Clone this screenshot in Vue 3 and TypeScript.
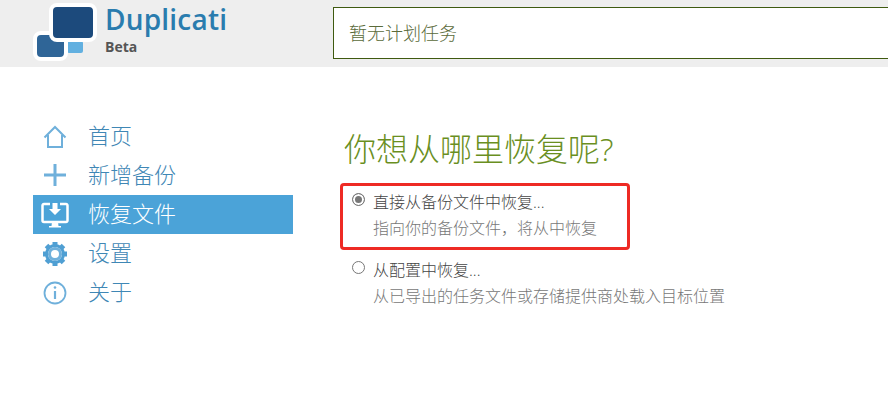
<script setup lang="ts">
const menu = [
  { label: '首页', icon: 'home' },
  { label: '新增备份', icon: 'add' },
  { label: '恢复文件', icon: 'restore', active: true },
  { label: '设置', icon: 'gear' },
  { label: '关于', icon: 'info' },
];
</script>

<template>
  <div class="page">
    <header class="top">
      <div class="logo">
        <svg class="mark" width="64" height="62" viewBox="0 0 64 62">
          <rect x="34" y="39" width="16" height="12" rx="2" fill="#62b0e0" />
          <rect x="2" y="31" width="31" height="26" rx="6" fill="#2f6597" stroke="#fff" stroke-width="4" />
          <rect x="18" y="3" width="44" height="35" rx="6" fill="#1c4a7c" stroke="#fff" stroke-width="4" />
        </svg>
        <div class="brand">
          <div class="name">Duplicati</div>
          <div class="beta">Beta</div>
        </div>
      </div>
      <div class="status">暂无计划任务</div>
    </header>

    <div class="body">
      <nav class="side">
        <a v-for="m in menu" :key="m.label" :class="['item', { active: m.active }]">
          <span class="icon">
            <svg v-if="m.icon === 'home'" width="24" height="24" viewBox="0 0 24 24" fill="none" stroke="#6fb0db" stroke-width="2">
              <path d="M1.5 12.5 12 2l10.5 10.500M5 10v12h14V10" />
            </svg>
            <svg v-else-if="m.icon === 'add'" class="plus" width="22" height="22" viewBox="0 0 22 22" fill="none" stroke="#6fb0db" stroke-width="3">
              <path d="M11 0v22M0 11h22" />
            </svg>
            <svg v-else-if="m.icon === 'restore'" width="28" height="28" viewBox="0 0 28 28">
              <path d="M9 3H3a1.500 1.500 0 0 0-1.500 1.500v15A1.500 1.500 0 0 0 3 21h22a1.500 1.500 0 0 0 1.500-1.500v-15A1.500 1.500 0 0 0 25 3h-6" fill="none" stroke="#fff" stroke-width="2.500" />
              <path d="M11.500 2h5v6h3.500L14 14 8 8h3.500zM11 21h6l.5 4h2.500v1.500H8V25h2.500z" fill="#fff" />
            </svg>
            <svg v-else-if="m.icon === 'gear'" width="26" height="26" viewBox="0 0 26 26">
              <circle cx="13" cy="13" r="7.500" fill="none" stroke="#4f9fd3" stroke-width="5" />
              <path d="M13 1v24M1 13h24M4.500 4.500l17 17M21.500 4.500l-17 17" stroke="#4f9fd3" stroke-width="5" />
              <circle cx="13" cy="13" r="7" fill="#fff" />
              <circle cx="13" cy="13" r="5.500" fill="none" stroke="#6fb0db" stroke-width="3" />
            </svg>
            <svg v-else width="24" height="24" viewBox="0 0 24 24" fill="none" stroke="#6fb0db" stroke-width="1.800">
              <circle cx="12" cy="12" r="10.500" />
              <path d="M12 10v8" stroke-width="2.200" />
              <circle cx="12" cy="6.500" r="1.300" fill="#6fb0db" stroke="none" />
            </svg>
          </span>
          <span class="label">{{ m.label }}</span>
        </a>
      </nav>

      <main class="content">
        <h1>你想从哪里恢复呢?</h1>
        <div class="option first">
          <span class="radio checked"></span>
          <div>
            <div class="opt-title">直接从备份文件中恢复...</div>
            <div class="opt-desc">指向你的备份文件，将从中恢复</div>
          </div>
          <div class="mark-box"></div>
        </div>
        <div class="option">
          <span class="radio"></span>
          <div>
            <div class="opt-title">从配置中恢复...</div>
            <div class="opt-desc">从已导出的任务文件或存储提供商处载入目标位置</div>
          </div>
        </div>
      </main>
    </div>
  </div>
</template>

<style>
html, body {
  margin: 0;
  background: #fff;
  overflow: hidden;
}
</style>

<style scoped>
.page {
  width: 888px;
  height: 412px;
  overflow: hidden;
  font-family: "Open Sans", "Noto Sans CJK SC", sans-serif;
}

.top {
  display: flex;
  height: 67px;
  background: #eeeeee;
}

.logo {
  display: flex;
  width: 333px;
  flex-shrink: 0;
  padding-left: 33px;
  box-sizing: border-box;
}

.mark {
  margin-top: 2px;
}

.brand {
  margin-left: 8px;
}

.name {
  font-size: 28px;
  font-weight: 600;
  line-height: 38px;
  letter-spacing: 0.2px;
  color: #2a7cae;
}

.beta {
  font-size: 14px;
  font-weight: 700;
  line-height: 18px;
  color: #555;
}

.status {
  flex: 1;
  height: 52px;
  margin-top: 7px;
  padding-left: 15px;
  box-sizing: border-box;
  border: 1px solid #3f5a10;
  border-right: 0;
  background: #fff;
  font-size: 18px;
  font-weight: 300;
  line-height: 50px;
  color: #5a6b3a;
}

.body {
  display: flex;
}

.side {
  width: 260px;
  margin: 50px 0 0 33px;
  flex-shrink: 0;
}

.item {
  display: flex;
  align-items: center;
  height: 39px;
  color: #3f87b5;
}

.item.active {
  background: #4ba3d8;
  color: #fff;
}

.icon {
  display: flex;
  justify-content: center;
  width: 44px;
}

.plus {
  margin-top: -2px;
}

.label {
  margin-left: 11px;
  margin-top: -4px;
  font-size: 22px;
  font-weight: 300;
  line-height: 30px;
}

.content {
  margin-left: 51px;
}

h1 {
  margin: 58px 0 0;
  font-size: 32px;
  font-weight: 300;
  line-height: 48px;
  color: #6a8f1f;
}

.option {
  position: relative;
  display: flex;
  margin-top: 15px;
  font-size: 16px;
  font-weight: 300;
  color: #444;
}

.option.first {
  margin-top: 16px;
}

.radio {
  box-sizing: border-box;
  width: 13px;
  height: 13px;
  margin: 4px 8px 0 8px;
  border: 1px solid #777;
  border-radius: 50%;
  background: #fff;
}

.radio.checked {
  background: #777;
  box-shadow: inset 0 0 0 2px #fff;
}

.opt-title {
  line-height: 26px;
}

.opt-desc {
  line-height: 27px;
  color: #777;
}

.mark-box {
  position: absolute;
  left: -4px;
  top: -6px;
  width: 290px;
  height: 67px;
  box-sizing: border-box;
  border: 3px solid #ee2a24;
  border-radius: 4px;
}
</style>
